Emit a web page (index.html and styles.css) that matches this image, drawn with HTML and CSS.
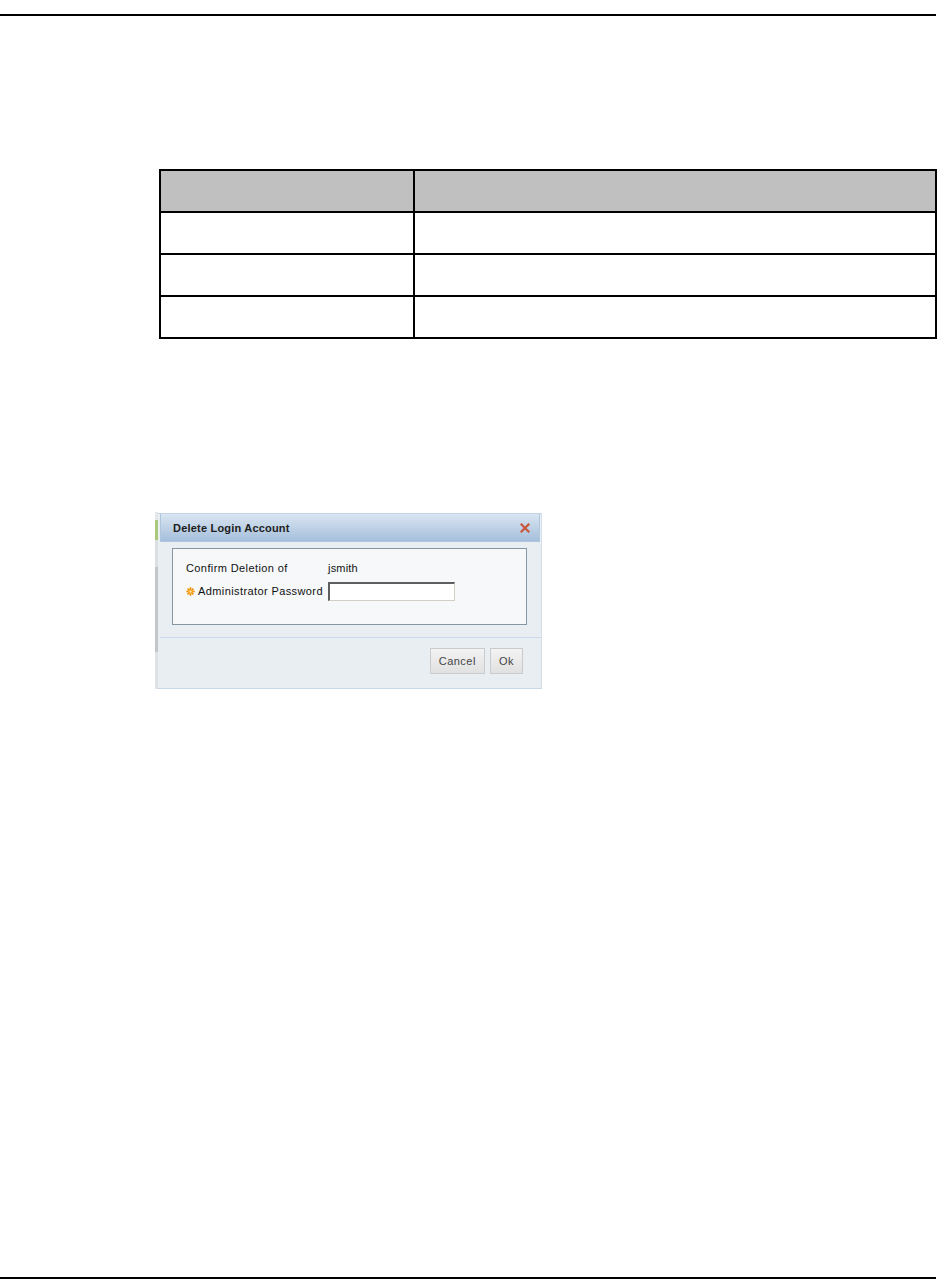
FILE: index.html
```html
<!DOCTYPE html>
<html>
<head>
	<title>Delete Login Account</title>
	<link rel="stylesheet" href="styles.css">
</head>
<body>
	<div id="page">
		<div class="rule top"></div>

		<table class="grid">
			<tr class="head"><th class="c1"></th><th></th></tr>
			<tr><td class="c1"></td><td></td></tr>
			<tr><td class="c1"></td><td></td></tr>
			<tr><td class="c1"></td><td></td></tr>
		</table>

		<div class="shot">
			<div class="strip"></div>
			<div class="dlg">
				<div class="dlg-head">
					<span class="dlg-title">Delete Login Account</span>
					<svg class="dlg-close" width="10" height="10" viewBox="0 0 10 10">
						<path d="M1.5 1.5 L8.5 8.5 M8.5 1.5 L1.5 8.5" stroke="#c9553a" stroke-width="2.2" stroke-linecap="square" />
					</svg>
				</div>
				<div class="dlg-body">
					<div class="panel">
						<div class="row">
							<span class="lbl">Confirm Deletion of</span>
							<span class="val">jsmith</span>
						</div>
						<div class="row">
							<span class="lbl">
								<svg class="req" width="9" height="9" viewBox="0 0 8 8">
									<g stroke="#f08a00" stroke-width="1.4">
										<path d="M4 0.3 V7.7 M0.3 4 H7.7 M1.4 1.4 L6.6 6.6 M6.6 1.4 L1.4 6.6" />
									</g>
									<circle cx="4" cy="4" r="2.4" fill="#f6a623" />
									<circle cx="4" cy="4" r="1" fill="#ffe9a8" />
								</svg>Administrator Password</span>
							<input class="pwd" type="password">
						</div>
					</div>
				</div>
				<div class="dlg-foot">
					<div class="button">Cancel</div>
					<div class="button">Ok</div>
				</div>
			</div>
		</div>

		<div class="rule bottom"></div>
	</div>
</body>
</html>
```

FILE: styles.css
```css
html {
	background: #fff;
}

body {
	margin: 0;
	font-family: 'Liberation Sans', Arial, sans-serif;
}

#page {
	display: flex;
	flex-direction: column;
	min-height: 1285px;
	box-sizing: border-box;
	padding-top: 14px;
	padding-bottom: 6px;
}

.rule {
	height: 2px;
	background: #000;
	width: 936px;
}

.rule.bottom {
	margin-top: auto;
}

/* document table */
.grid {
	margin-top: 153px;
	margin-left: 159px;
	width: 778px;
	border-collapse: collapse;
}
.grid th, .grid td {
	border: 2px solid #000;
	height: 40px;
	padding: 0;
}
.grid .c1 {
	width: 252px;
}
.grid .head th {
	background: #c0c0c0;
}

/* dialog screenshot */
.shot {
	display: flex;
	margin-top: 174px;
	margin-left: 155px;
	width: 387px;
	height: 176px;
	font-family: 'Liberation Sans', Tahoma, sans-serif;
	font-size: 11px;
	color: #111;
}

.strip {
	width: 3px;
	margin-top: -1px;
	background: linear-gradient(#e4e8ec 0px, #e4e8ec 8px, #a9c97c 8px, #a9c97c 28px, #dcdfe2 28px, #dcdfe2 55px, #c2c6ca 55px, #c2c6ca 140px, #dde2e6 140px);
}

.dlg {
	flex: 1;
	display: flex;
	flex-direction: column;
	background: #e9eef2;
	border-top: 1px solid #c3d4e6;
	border-right: 1px solid #d6dfe7;
	border-bottom: 1px solid #c9d8e8;
	padding-left: 2px;
}

.dlg-head {
	display: flex;
	align-items: center;
	justify-content: space-between;
	height: 27px;
	margin-right: 1px;
	padding: 0 9px 0 12px;
	background: linear-gradient(#d9e5f1, #a5bfdb);
	border: 1px solid #aec6de;
	border-top: none;
}

.dlg-title {
	font-weight: bold;
	font-size: 11px;
	letter-spacing: 0.2px;
	color: #1d1d1d;
}

.dlg-body {
	padding: 6px 14px 12px 12px;
	border-bottom: 1px solid #cbdaea;
}

.panel {
	border: 1px solid #8596a2;
	background: #f6f8fa;
	padding: 9px 13px 0 13px;
	box-sizing: border-box;
	height: 77px;
	display: flex;
	flex-direction: column;
	gap: 3px;
}

.row {
	display: flex;
	align-items: center;
	height: 20px;
}

.lbl {
	display: flex;
	align-items: center;
	width: 142px;
	letter-spacing: 0.4px;
}

.val {
	letter-spacing: 0.2px;
}

.req {
	margin-right: 3px;
}

.pwd {
	width: 127px;
	height: 19px;
	box-sizing: border-box;
	margin: 0;
	padding: 0;
	border: 1px solid #d3cfc4;
	border-top: 2px solid #5e5e5e;
	border-left: 2px solid #5e5e5e;
	background: #fff;
}

.dlg-foot {
	display: flex;
	justify-content: flex-end;
	gap: 5px;
	padding: 10px 18px 0 0;
}

.button {
	display: flex;
	align-items: center;
	justify-content: center;
	height: 26px;
	padding: 0 8px;
	box-sizing: border-box;
	border: 1px solid #c9cbcd;
	background: linear-gradient(#f3f3f3, #e1e1e1);
	color: #444;
	letter-spacing: 0.5px;
	cursor: pointer;
}
```
